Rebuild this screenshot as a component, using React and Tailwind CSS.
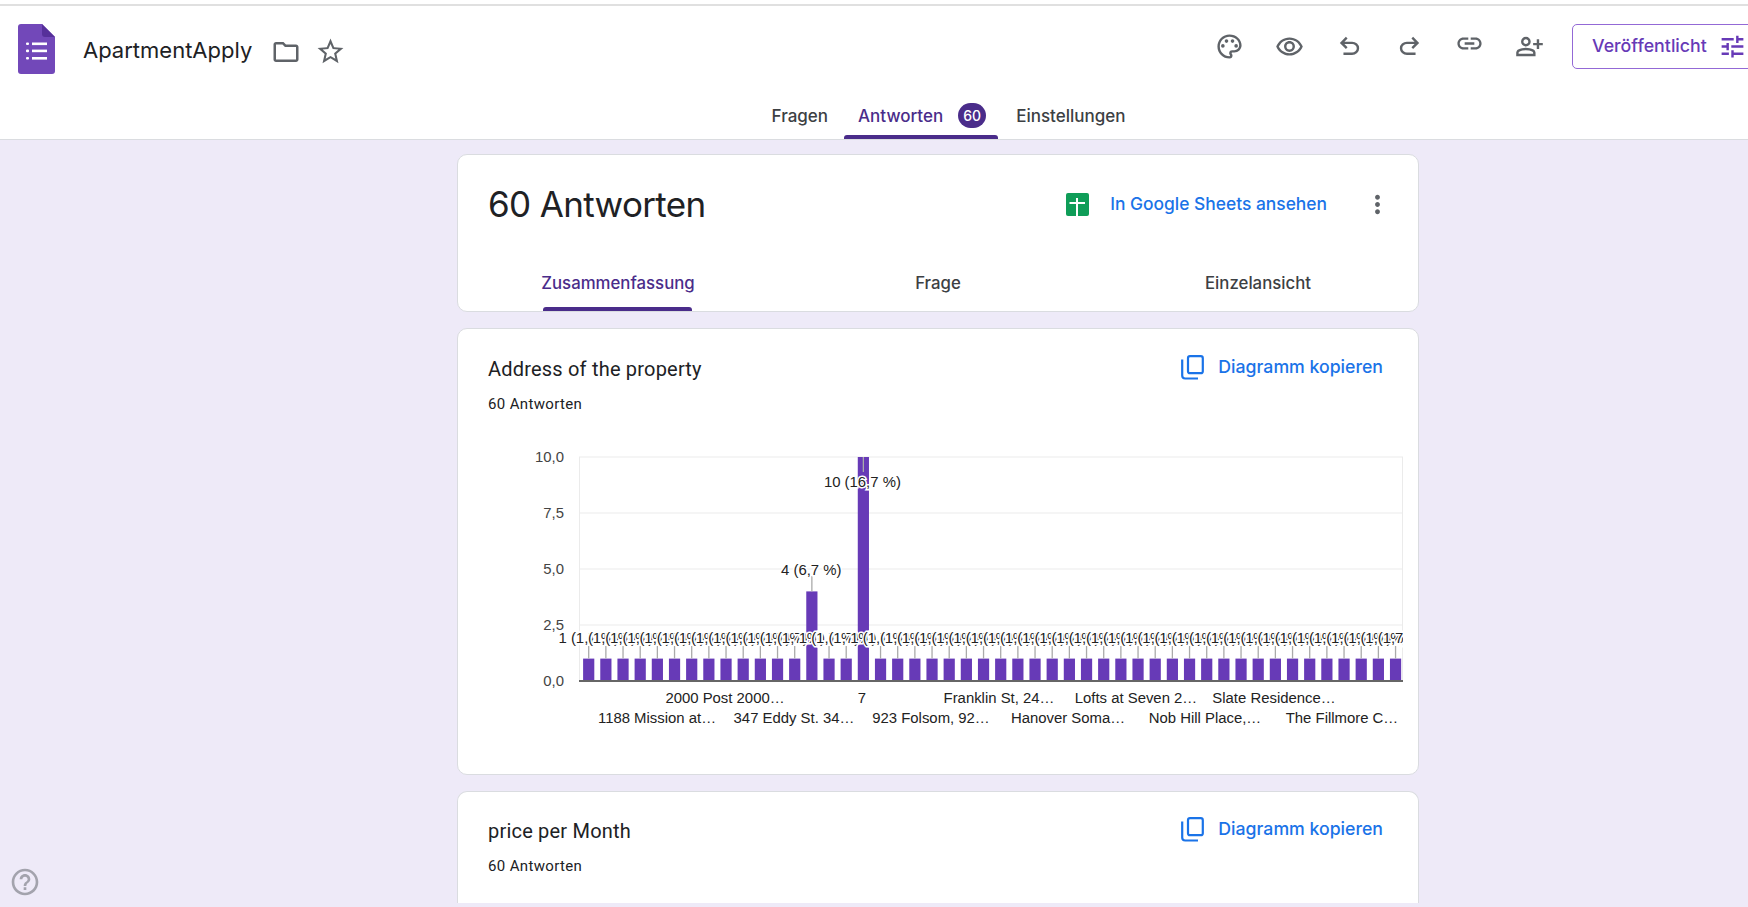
import React from 'react';
import {
  MdOutlinePalette,
  MdOutlineRemoveRedEye,
  MdLink,
  MdTune,
  MdOutlineFolder,
  MdStarBorder,
  MdHelpOutline,
  MdMoreVert,
} from 'react-icons/md';

const googleSans = 'font-["Inter","Open_Sans",sans-serif]';

// 48 answers in the chart, two of them with more than one response
const values = Array.from({ length: 48 }, (_, i) => (i === 13 ? 4 : i === 16 ? 10 : 1));
const barCenter = (i) => 588.7 + i * 17.167;
const barTop = (v) => 681 - v * 22.4;

const row1 = [
  ['2000 Post 2000…', 725],
  ['7', 862],
  ['Franklin St, 24…', 999],
  ['Lofts at Seven 2…', 1136],
  ['Slate Residence…', 1274],
];
const row2 = [
  ['1188 Mission at…', 657],
  ['347 Eddy St. 34…', 794],
  ['923 Folsom, 92…', 931],
  ['Hanover Soma…', 1068],
  ['Nob Hill Place,…', 1205],
  ['The Fillmore C…', 1342],
];
const yAxis = [
  ['10,0', 457],
  ['7,5', 513],
  ['5,0', 569],
  ['2,5', 625],
  ['0,0', 681],
];

// rounded symbols, the md set only has the older shapes for these
const UndoIcon = () => (
  <svg width="29" height="29" viewBox="0 -960 960 960" fill="currentColor">
    <path d="M280-200v-80h284q63 0 109.5-40T720-420q0-60-46.5-100T564-560H312l104 104-56 56-200-200 200-200 56 56-104 104h252q97 0 166.5 63T800-420q0 94-69.5 157T564-200H280Z" />
  </svg>
);

const RedoIcon = () => (
  <svg width="29" height="29" viewBox="0 -960 960 960" fill="currentColor">
    <path d="M396-200q-97 0-166.5-63T160-420q0-94 69.5-157T396-640h252L544-744l56-56 200 200-200 200-56-56 104-104H396q-63 0-109.5 40T240-420q0 60 46.5 100T396-280h284v80H396Z" />
  </svg>
);

const PersonAddIcon = () => (
  <svg width="29" height="29" viewBox="0 -960 960 960" fill="currentColor">
    <path d="M720-400v-120H600v-80h120v-120h80v120h120v80H800v120h-80Zm-360-80q-66 0-113-47t-47-113q0-66 47-113t113-47q66 0 113 47t47 113q0 66-47 113t-113 47ZM40-160v-112q0-34 17.5-62.5T104-378q62-31 126-46.5T360-440q66 0 130 15.5T616-378q29 15 46.5 43.5T680-272v112H40Zm80-80h480v-32q0-11-5.5-20T580-306q-54-27-109-40.5T360-360q-56 0-111 13.5T140-306q-9 5-14.5 14t-5.5 20v32Zm240-320q33 0 56.5-23.5T440-640q0-33-23.5-56.5T360-720q-33 0-56.5 23.5T280-640q0 33 23.5 56.5T360-560Z" />
  </svg>
);

const FormsLogo = () => (
  <svg width="37" height="50" viewBox="0 0 37 50" className="shrink-0">
    <path d="M3 0H24L37 13V47a3 3 0 0 1-3 3H3a3 3 0 0 1-3-3V3a3 3 0 0 1 3-3Z" fill="#7248b9" />
    <path d="M24 0L37 13H27a3 3 0 0 1-3-3Z" fill="#56309a" />
    <rect x="8" y="18.5" width="3" height="2.6" rx="1" fill="#fff" />
    <rect x="8" y="25.6" width="3" height="2.6" rx="1" fill="#fff" />
    <rect x="8" y="33" width="3" height="2.6" rx="1" fill="#fff" />
    <rect x="14" y="18.5" width="15" height="2.6" fill="#fff" />
    <rect x="14" y="25.6" width="15" height="2.6" fill="#fff" />
    <rect x="14" y="33" width="15" height="2.6" fill="#fff" />
  </svg>
);

const SheetsIcon = () => (
  <svg width="23" height="23" viewBox="0 0 23 23" className="shrink-0">
    <rect width="23" height="23" rx="2" fill="#0f9d58" />
    <rect x="10" y="5" width="2" height="18" fill="#fff" />
    <rect x="3.5" y="9" width="15.5" height="2" fill="#fff" />
  </svg>
);

const CopyIcon = () => (
  <svg width="24" height="25" viewBox="0 0 24 25" fill="none" stroke="#1a73e8" strokeWidth="2.2" className="shrink-0">
    <rect x="7" y="1.2" width="14.8" height="17" rx="2" />
    <path d="M1.2 4.5V20.5a3 3 0 0 0 3 3H17" />
  </svg>
);

const CopyButton = () => (
  <div className={`flex items-center gap-[13px] text-[17.7px] font-medium text-[#1a73e8] ${googleSans}`}>
    <CopyIcon />
    <span>Diagramm kopieren</span>
  </div>
);

const BarChart = () => (
  <svg viewBox="458 440 960 320" width="960" height="320" className="block" fontFamily="'Liberation Sans', Arial, sans-serif" fontSize="14.9">
    <defs>
      <clipPath id="plot-labels">
        <rect x="500" y="440" width="903" height="300" />
      </clipPath>
    </defs>
    {/* grid */}
    {[457, 513, 569, 625].map((y) => (
      <line key={y} x1="579" x2="1403" y1={y} y2={y} stroke="#ebebeb" strokeWidth="1.2" />
    ))}
    <line x1="579.5" x2="579.5" y1="457" y2="681" stroke="#ebebeb" />
    <line x1="1402.5" x2="1402.5" y1="457" y2="681" stroke="#ebebeb" />
    {/* bars */}
    {values.map((v, i) => (
      <rect key={i} x={barCenter(i) - 5.6} y={barTop(v)} width="11.2" height={681 - barTop(v)} fill="#673ab7" />
    ))}
    <line x1="579" x2="1403" y1="681" y2="681" stroke="#666" strokeWidth="2" />
    {/* leader lines */}
    {values.map((v, i) => {
      if (v === 10) return <line key={i} x1={barCenter(i)} x2={barCenter(i)} y1="457" y2="472" stroke="#aaa" strokeWidth="1.3" />;
      if (v === 4) return <line key={i} x1={barCenter(i)} x2={barCenter(i)} y1="576" y2={barTop(v)} stroke="#aaa" strokeWidth="1.3" />;
      return <line key={i} x1={barCenter(i)} x2={barCenter(i)} y1="646" y2={barTop(v)} stroke="#aaa" strokeWidth="1.3" />;
    })}
    {/* value labels with white halo, as the chart lib draws them */}
    <g clipPath="url(#plot-labels)" fill="#222" stroke="#fff" strokeWidth="3" paintOrder="stroke" textAnchor="middle">
      {values.map((v, i) =>
        v === 1 ? (
          <text key={i} x={barCenter(i)} y="642.5">
            1 (1,7 %)
          </text>
        ) : null
      )}
      <text x={barCenter(13) - 0.6} y="574.5">4 (6,7 %)</text>
      <text x={barCenter(16) - 1} y="486.5">10 (16,7 %)</text>
    </g>
    {/* axes */}
    {yAxis.map(([t, y]) => (
      <text key={t} x="564" y={y + 5} textAnchor="end" fill="#444">
        {t}
      </text>
    ))}
    {row1.map(([t, x]) => (
      <text key={t} x={x} y="703" textAnchor="middle" fill="#222">
        {t}
      </text>
    ))}
    {row2.map(([t, x]) => (
      <text key={t} x={x} y="723" textAnchor="middle" fill="#222">
        {t}
      </text>
    ))}
  </svg>
);

const QuestionHeader = ({ title }) => (
  <div className="flex items-start justify-between pl-[30px] pr-[35px]">
    <div className="font-['Roboto',sans-serif] text-[#202124]">
      <div className="text-[20px] leading-[24px] tracking-[0.2px]">{title}</div>
      <div className="mt-[13px] text-[15px] leading-[20px] tracking-[0.35px]">60 Antworten</div>
    </div>
    <div className="-mt-[3px]">
      <CopyButton />
    </div>
  </div>
);

export default function App() {
  return (
    <div className="relative h-[907px] w-[1748px] overflow-hidden bg-[#eeeaf8]">
      <div className="w-[1876px]">
        {/* header */}
        <div className="bg-white">
          <div className="h-[4px] border-0 bg-white" />
          <div className="h-[2px] bg-[#e0e0e0]" />
          <div className="flex h-[84px] items-start pl-[18px] pr-[18px] pt-[18px]">
            <FormsLogo />
            <div className={`ml-[28px] mt-[11px] text-[22px] leading-[30px] text-[#202124] ${googleSans}`}>ApartmentApply</div>
            <MdOutlineFolder className="ml-[19px] mt-[13px] text-[30px] text-[#5f6368]" />
            <MdStarBorder className="ml-[14px] mt-[12px] text-[31px] text-[#5f6368]" />
            <div className="ml-auto flex items-center">
              <div className="mr-[28px] flex items-center gap-[31px] text-[29px] text-[#5f6368]">
                <MdOutlinePalette />
                <MdOutlineRemoveRedEye />
                <UndoIcon />
                <RedoIcon />
                <MdLink className="-mt-[6px]" />
                <PersonAddIcon />
              </div>
              <div className={`flex h-[45px] w-[286px] items-center gap-[11px] rounded-[5px] border border-[#9369d6] pl-[19px] text-[17.8px] font-medium text-[#673ab7] ${googleSans}`}>
                <span>Veröffentlicht</span>
                <MdTune className="text-[29px]" />
              </div>
            </div>
          </div>
          <div className={`ml-[24px] flex h-[50px] justify-center text-[17px] font-medium text-[#3c4043] ${googleSans}`}>
            <div className="flex h-[49px] items-center pl-[15px] pr-[16px] pt-[4px]">Fragen</div>
            <div className="relative flex h-[49px] items-center gap-[15px] pl-[14px] pr-[12px] pt-[4px] text-[#4a2c8a]">
              <span>Antworten</span>
              <span className="-mt-[2px] flex h-[25px] w-[28px] items-center justify-center rounded-full bg-[#4a2c8a] text-[14px] text-white">60</span>
              <span className="absolute bottom-0 left-0 right-0 h-[4px] rounded-t-[3px] bg-[#4a2c8a]" />
            </div>
            <div className="flex h-[49px] items-center px-[18px] pt-[4px]">Einstellungen</div>
          </div>
          <div className="-mt-[1px] h-[1px] bg-[#dadce0]" />
        </div>

        {/* content column */}
        <div className="mx-auto flex w-[962px] flex-col gap-[16px] pt-[14px]">
          <div className="h-[158px] rounded-[10px] border border-[#dadce0] bg-white">
            <div className="flex h-[100px] items-center pl-[30px] pr-[26px] pb-[2px]">
              <div className={`text-[35px] tracking-[-0.65px] text-[#202124] ${googleSans}`}>60 Antworten</div>
              <div className="ml-auto flex items-center">
                <SheetsIcon />
                <span className={`ml-[21px] text-[17.4px] font-medium text-[#1a73e8] ${googleSans}`}>In Google Sheets ansehen</span>
                <MdMoreVert className="ml-[36px] text-[29px] text-[#5f6368]" />
              </div>
            </div>
            <div className={`grid grid-cols-3 text-[16.8px] font-medium text-[#3c4043] ${googleSans}`}>
              <div className="relative flex h-[56px] items-start justify-center pt-[16px] text-[#4a2c8a]">
                Zusammenfassung
                <span className="absolute bottom-0 left-[85px] h-[4px] w-[149px] rounded-t-[3px] bg-[#4a2c8a]" />
              </div>
              <div className="flex h-[56px] items-start justify-center pt-[16px]">Frage</div>
              <div className="flex h-[56px] items-start justify-center pt-[16px]">Einzelansicht</div>
            </div>
          </div>

          <div className="h-[447px] rounded-[10px] border border-[#dadce0] bg-white pt-[28px]">
            <QuestionHeader title="Address of the property" />
            <div className="mt-[26px]">
              <BarChart />
            </div>
          </div>

          <div className="h-[112px] rounded-t-[10px] border-x border-t border-[#dadce0] bg-white pt-[27px]">
            <QuestionHeader title="price per Month" />
          </div>
        </div>
      </div>

      <MdHelpOutline className="absolute bottom-[9px] left-[9px] text-[32px] text-[#a3a3ad]" />
    </div>
  );
}
